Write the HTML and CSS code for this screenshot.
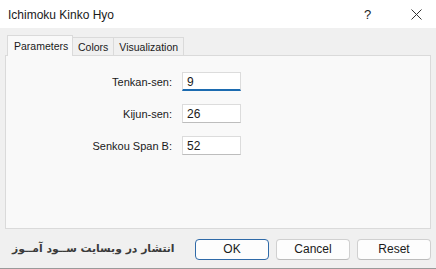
FILE: index.html
```html
<!DOCTYPE html>
<html>
<head>
<meta charset="utf-8">
<link rel="stylesheet" href="styles.css">
</head>
<body>
<div class="window">
  <div class="titlebar">
    <span class="title">Ichimoku Kinko Hyo</span>
    <span class="help">?</span>
    <span class="close">
      <svg width="11" height="11" viewBox="0 0 11 11"><path d="M0.5 0.5 L10.5 10.5 M10.5 0.5 L0.5 10.5" stroke="#333" stroke-width="1" fill="none"/></svg>
    </span>
  </div>
  <div class="content">
    <div class="tabs">
      <div class="tab active">Parameters</div>
      <div class="tab">Colors</div>
      <div class="tab">Visualization</div>
    </div>
    <div class="panel">
      <div class="form">
        <label class="lbl">Tenkan-sen:</label>
        <div class="input focused">9</div>
        <label class="lbl">Kijun-sen:</label>
        <div class="input">26</div>
        <label class="lbl">Senkou Span B:</label>
        <div class="input">52</div>
      </div>
    </div>
  </div>
  <div class="footer">
    <div class="watermark" dir="rtl">انتشار در وبسایت ســود آمــوز</div>
    <div class="buttons">
      <div class="btn default">OK</div>
      <div class="btn">Cancel</div>
      <div class="btn">Reset</div>
    </div>
  </div>
</div>
</body>
</html>
```

FILE: styles.css
```css
* { box-sizing: border-box; }
html, body { margin: 0; padding: 0; }
body {
  font-family: "Liberation Sans", Arial, sans-serif;
  color: #1a1a1a;
  background: #f0f0f0;
}
.window {
  width: 436px;
  height: 269px;
  background: #f0f0f0;
  display: flex;
  flex-direction: column;
  border-bottom: 1px solid #9a9a9a;
}
.titlebar {
  height: 28px;
  background: #ffffff;
  display: flex;
  align-items: center;
  padding-left: 8px;
  font-size: 12px;
}
.title { flex: 1; padding-top: 1px; }
.help {
  font-size: 13px;
  width: 10px;
  margin-right: 37px;
  color: #222;
}
.close {
  width: 11px;
  height: 11px;
  margin-right: 14px;
  display: flex;
}
.content {
  padding: 7px 5px 0 5px;
}
.tabs {
  display: flex;
  align-items: flex-end;
  height: 20px;
  padding-left: 2px;
  position: relative;
  z-index: 1;
}
.tab {
  font-size: 10.5px;
  height: 18px;
  padding: 3px 5px 0 5px;
  border: 1px solid #dadada;
  border-bottom: none;
  background: #f0f0f0;
  margin-left: -1px;
  color: #1a1a1a;
}
.tab:first-child { margin-left: 0; }
.tab.active {
  height: 21px;
  padding: 4px 0 0 6px;
  background: #f9f9f9;
  margin-bottom: -1px;
  position: relative;
  z-index: 2;
  width: 66px;
}
.panel {
  height: 174px;
  border: 1px solid #dadada;
  background: #f9f9f9;
  padding-top: 16px;
}
.form {
  display: grid;
  grid-template-columns: 166px 59px;
  column-gap: 10px;
  row-gap: 13px;
}
.lbl {
  font-size: 11px;
  text-align: right;
  align-self: center;
  color: #1a1a1a;
}
.input {
  height: 19px;
  background: #ffffff;
  border: 1px solid #dcdcdc;
  border-bottom-color: #bdbdbd;
  font-size: 12px;
  padding: 2px 0 0 4px;
  line-height: 14px;
}
.input.focused {
  border-bottom: 2px solid #1c6bb0;
}
.footer {
  flex: 1;
  display: flex;
  align-items: flex-start;
  padding-top: 10px;
}
.watermark {
  font-family: "DejaVu Sans", sans-serif;
  font-weight: bold;
  font-size: 10.8px;
  color: #3a3a3a;
  margin-left: 12px;
  padding-top: 3px;
  white-space: nowrap;
}
.buttons {
  margin-left: auto;
  display: flex;
  gap: 7px;
  padding-right: 5px;
}
.btn {
  width: 74px;
  height: 21px;
  background: #fdfdfd;
  border: 1px solid #d0d0d0;
  border-bottom-color: #bcbcbc;
  border-radius: 4px;
  font-size: 12px;
  text-align: center;
  line-height: 19px;
  color: #1a1a1a;
}
.btn.default {
  border: 1px solid #2f6aa8;
}
```
